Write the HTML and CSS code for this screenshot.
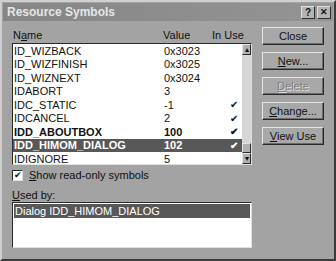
FILE: index.html
```html
<!DOCTYPE html>
<html lang="en">
<head>
  <meta charset="UTF-8" />
  <title>Resource Symbols</title>
  <link rel="stylesheet" href="styles.css">
</head>
<body>
  <div class="window">
    <div class="titlebar">
      <span class="title">Resource Symbols</span>
      <div class="caption-btns">
        <span class="cap-btn">?</span>
        <span class="cap-btn close-x">&#x2715;</span>
      </div>
    </div>

    <div class="content">
      <div class="left">
        <div class="cols">
          <span class="col-name">N<u>a</u>me</span>
          <span class="col-value">Value</span>
          <span class="col-use">In Use</span>
        </div>

        <div class="listbox">
          <div class="rows">
            <div class="row"><span class="c-name">ID_WIZBACK</span><span class="c-value">0x3023</span><span class="c-use"></span></div>
            <div class="row"><span class="c-name">ID_WIZFINISH</span><span class="c-value">0x3025</span><span class="c-use"></span></div>
            <div class="row"><span class="c-name">ID_WIZNEXT</span><span class="c-value">0x3024</span><span class="c-use"></span></div>
            <div class="row"><span class="c-name">IDABORT</span><span class="c-value">3</span><span class="c-use"></span></div>
            <div class="row"><span class="c-name">IDC_STATIC</span><span class="c-value">-1</span><span class="c-use">&#x2714;</span></div>
            <div class="row"><span class="c-name">IDCANCEL</span><span class="c-value">2</span><span class="c-use">&#x2714;</span></div>
            <div class="row bold"><span class="c-name">IDD_ABOUTBOX</span><span class="c-value">100</span><span class="c-use">&#x2714;</span></div>
            <div class="row bold selected"><span class="c-name">IDD_HIMOM_DIALOG</span><span class="c-value">102</span><span class="c-use">&#x2714;</span></div>
            <div class="row"><span class="c-name">IDIGNORE</span><span class="c-value">5</span><span class="c-use"></span></div>
          </div>
          <div class="scrollbar">
            <div class="sb-btn">&#x25B4;</div>
            <div class="sb-track"></div>
            <div class="sb-thumb"></div>
            <div class="sb-btn">&#x25BE;</div>
          </div>
        </div>

        <label class="check-row">
          <span class="checkbox">&#x2714;</span>
          <span><u>S</u>how read-only symbols</span>
        </label>

        <div class="usedby-label"><u>U</u>sed by:</div>
        <div class="usedby">
          <div class="row selected">Dialog IDD_HIMOM_DIALOG</div>
        </div>
      </div>

      <div class="buttons">
        <button class="btn">Close</button>
        <button class="btn"><u>N</u>ew...</button>
        <button class="btn disabled"><u>D</u>elete</button>
        <button class="btn"><u>C</u>hange...</button>
        <button class="btn"><u>V</u>iew Use</button>
      </div>
    </div>
  </div>
</body>
</html>
```

FILE: styles.css
```css
body {
  margin: 0;
  background-color: #a3a3a3;
  font-family: 'Liberation Sans', Arial, sans-serif;
  font-size: 11px;
  color: #111;
}
.window {
  width: 336px;
  height: 261px;
  box-sizing: border-box;
  background-color: #a3a3a3;
  border: 2px solid;
  border-color: #d0d0d0 #3c3c3c #3c3c3c #d0d0d0;
  padding: 1px;
}
.titlebar {
  height: 18px;
  background: linear-gradient(to right, #868686, #949494);
  display: flex;
  align-items: center;
  justify-content: space-between;
  padding: 0 2px 0 4px;
}
.title {
  color: #e6e6e6;
  font-weight: bold;
  font-size: 12px;
}
.caption-btns {
  display: flex;
  gap: 2px;
}
.cap-btn {
  width: 14px;
  height: 13px;
  box-sizing: border-box;
  background-color: #b4b4b4;
  border: 1px solid;
  border-color: #e0e0e0 #303030 #303030 #e0e0e0;
  font-size: 10px;
  font-weight: bold;
  line-height: 11px;
  text-align: center;
  color: #111;
}
.close-x { font-size: 9px; }
.content {
  display: flex;
  padding: 6px 0 0 9px;
}
.left {
  width: 240px;
}
.cols {
  display: flex;
  height: 14px;
  align-items: flex-end;
  padding: 0 0 2px 1px;
}
.col-name { width: 150px; }
.col-value { width: 49px; }
.col-use { width: 40px; }
.listbox {
  display: flex;
  height: 122px;
  box-sizing: border-box;
  background-color: #fff;
  border: 1px solid;
  border-color: #2a2a2a #e0e0e0 #e0e0e0 #2a2a2a;
}
.rows {
  flex: 1;
}
.row {
  display: flex;
  height: 13.5px;
  align-items: center;
  padding-left: 1px;
  white-space: nowrap;
}
.row.bold { font-weight: bold; }
.row.selected {
  background-color: #585858;
  color: #fff;
}
.c-name { width: 150px; }
.c-value { width: 66px; }
.c-use { width: 12px; font-size: 10px; }
.scrollbar {
  width: 12px;
  display: flex;
  flex-direction: column;
  background-color: #d6d6d6;
}
.sb-btn, .sb-thumb {
  height: 11px;
  box-sizing: border-box;
  background-color: #b0b0b0;
  border: 1px solid;
  border-color: #e4e4e4 #2a2a2a #2a2a2a #e4e4e4;
  font-size: 8px;
  line-height: 9px;
  text-align: center;
}
.sb-track { flex: 1; }
.sb-thumb { height: 10px; }
.check-row {
  display: flex;
  align-items: center;
  gap: 6px;
  margin-top: 3px;
  height: 14px;
}
.checkbox {
  width: 11px;
  height: 11px;
  box-sizing: border-box;
  background-color: #fff;
  border: 1px solid;
  border-color: #2a2a2a #e0e0e0 #e0e0e0 #2a2a2a;
  font-size: 9px;
  line-height: 9px;
  text-align: center;
}
.usedby-label {
  margin-top: 7px;
  height: 13px;
}
.usedby {
  height: 46px;
  box-sizing: border-box;
  background-color: #fff;
  border: 1px solid;
  border-color: #2a2a2a #e0e0e0 #e0e0e0 #2a2a2a;
  padding: 1px;
}
.buttons {
  display: flex;
  flex-direction: column;
  gap: 7px;
  margin-left: 10px;
}
.btn {
  width: 62px;
  height: 18px;
  background-color: #a8a8a8;
  border: 1px solid;
  border-color: #e4e4e4 #2a2a2a #2a2a2a #e4e4e4;
  box-shadow: inset -1px -1px 0 #6a6a6a;
  font-family: 'Liberation Sans', Arial, sans-serif;
  font-size: 11px;
  color: #111;
  padding: 0;
}
.btn.disabled {
  color: #7c7c7c;
  text-shadow: 1px 1px 0 #e0e0e0;
}
```
